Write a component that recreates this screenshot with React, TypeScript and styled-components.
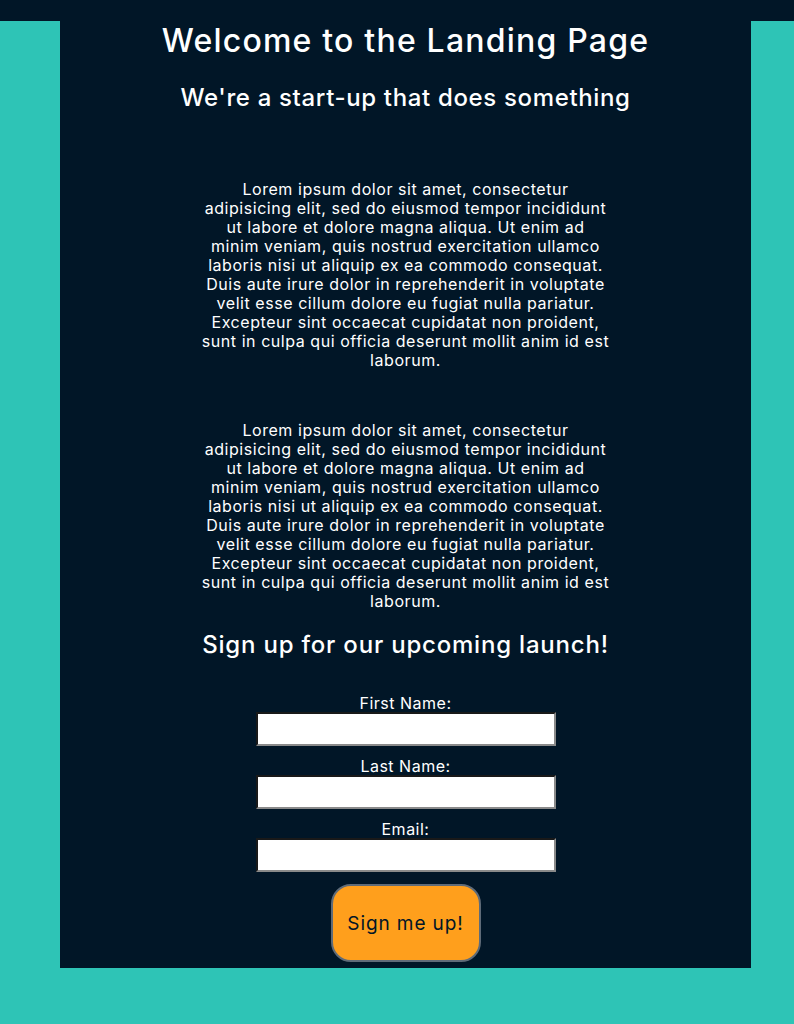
import React from "react";
import styled, { createGlobalStyle } from "styled-components";

const GlobalStyle = createGlobalStyle`
  html, body {
    margin: 0;
    padding: 0;
    background: #2ec4b6;
  }
  body {
    font-family: Inter, "Open Sans", "Noto Sans", sans-serif;
    color: #ffffff;
  }
`;

const TopBar = styled.div`
  height: 21px;
  background: #011627;
`;

const Main = styled.main`
  margin-left: 60px;
  width: 691px;
  background: #011627;
  padding-bottom: 6px;
  display: flex;
  flex-direction: column;
  align-items: center;
  text-align: center;
`;

const Title = styled.h1`
  margin: 0;
  font-size: 32px;
  font-weight: 500;
  line-height: 39px;
  letter-spacing: 1.2px;
`;

const Subtitle = styled.h2`
  margin: 23px 0 0;
  font-size: 24px;
  font-weight: 500;
  line-height: 29px;
  letter-spacing: 0.65px;
`;

const Paragraph = styled.p<{ $top: number }>`
  margin: ${(p) => p.$top}px 0 0;
  font-size: 16px;
  line-height: 19px;
  letter-spacing: 0.55px;
`;

const Line = styled.span`
  display: block;
  white-space: nowrap;
`;

const SignupTitle = styled.h3`
  margin: 19px 0 0;
  font-size: 24px;
  font-weight: 500;
  line-height: 29px;
  letter-spacing: 0.8px;
`;

const Form = styled.form`
  margin-top: 36px;
  display: flex;
  flex-direction: column;
  align-items: center;
`;

const Field = styled.div<{ $first?: boolean }>`
  display: flex;
  flex-direction: column;
  align-items: center;
  margin-top: ${(p) => (p.$first ? 0 : 12)}px;
`;

const Label = styled.label`
  font-size: 16px;
  line-height: 17px;
  letter-spacing: 0.5px;
`;

const Input = styled.input`
  box-sizing: border-box;
  width: 300px;
  height: 34px;
  background: #ffffff;
  border: 2px inset #8a8a8a;
  border-top-color: #6e6e6e;
  border-left-color: #6e6e6e;
  padding: 1px 2px;
  font-size: 15px;
`;

const Button = styled.button`
  box-sizing: border-box;
  margin-top: 12px;
  width: 150px;
  height: 78px;
  background: #ff9f1c;
  border: 2px solid #5f6b78;
  border-radius: 20px;
  color: #011627;
  font-family: inherit;
  font-size: 19px;
  letter-spacing: 0.9px;
  cursor: pointer;
`;

const lorem = [
  "Lorem ipsum dolor sit amet, consectetur",
  "adipisicing elit, sed do eiusmod tempor incididunt",
  "ut labore et dolore magna aliqua. Ut enim ad",
  "minim veniam, quis nostrud exercitation ullamco",
  "laboris nisi ut aliquip ex ea commodo consequat.",
  "Duis aute irure dolor in reprehenderit in voluptate",
  "velit esse cillum dolore eu fugiat nulla pariatur.",
  "Excepteur sint occaecat cupidatat non proident,",
  "sunt in culpa qui officia deserunt mollit anim id est",
  "laborum.",
];

const Lorem: React.FC<{ top: number }> = ({ top }) => (
  <Paragraph $top={top}>
    {lorem.map((l, i) => (
      <Line key={i}>{l}</Line>
    ))}
  </Paragraph>
);

export default function App() {
  return (
    <>
      <GlobalStyle />
      <TopBar />
      <Main>
        <Title>Welcome to the Landing Page</Title>
        <Subtitle>We're a start-up that does something</Subtitle>
        <Lorem top={68} />
        <Lorem top={51} />
        <SignupTitle>Sign up for our upcoming launch!</SignupTitle>
        <Form onSubmit={(e) => e.preventDefault()}>
          <Field $first>
            <Label htmlFor="first">First Name:</Label>
            <Input id="first" type="text" />
          </Field>
          <Field>
            <Label htmlFor="last">Last Name:</Label>
            <Input id="last" type="text" />
          </Field>
          <Field>
            <Label htmlFor="email">Email:</Label>
            <Input id="email" type="email" />
          </Field>
          <Button type="submit">Sign me up!</Button>
        </Form>
      </Main>
    </>
  );
}
